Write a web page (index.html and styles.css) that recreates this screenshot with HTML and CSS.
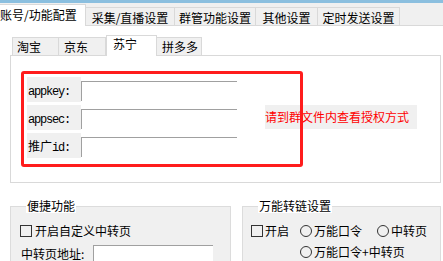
FILE: index.html
```html
<!DOCTYPE html>
<html lang="zh-CN">
<head>
<meta charset="utf-8">
<title>配置</title>
<link rel="stylesheet" href="styles.css">
</head>
<body>
<div class="titlebar"></div>
<div class="tabs">
  <div class="tab active">账号/功能配置</div>
  <div class="tab t2">采集/直播设置</div>
  <div class="tab t3">群管功能设置</div>
  <div class="tab t4">其他设置</div>
  <div class="tab t5">定时发送设置</div>
</div>
<div class="content">
  <div class="subtabs">
    <div class="subtab s1">淘宝</div>
    <div class="subtab s2">京东</div>
    <div class="subtab s3 current">苏宁</div>
    <div class="subtab s4">拼多多</div>
  </div>
  <div class="panel">
    <div class="rows">
      <div class="row"><span class="lbl"><span class="mono">appkey:</span></span><span class="input"></span></div>
      <div class="row"><span class="lbl"><span class="mono">appsec:</span></span><span class="input"></span><span class="hint">请到群文件内查看授权方式</span></div>
      <div class="row"><span class="lbl">推广<span class="mono">id:</span></span><span class="input"></span></div>
    </div>
    <div class="redbox"></div>
  </div>
  <div class="groups">
    <fieldset class="group g1">
      <legend>便捷功能</legend>
      <div class="opt"><span class="check"></span><span class="otext">开启自定义中转页</span></div>
      <div class="addr"><span class="addr-lbl">中转页地址:</span><span class="input addr-input"></span></div>
    </fieldset>
    <fieldset class="group g2">
      <legend>万能转链设置</legend>
      <div class="opt"><span class="check"></span><span class="otext">开启</span><span class="radio r1"></span><span class="otext">万能口令</span><span class="radio r2"></span><span class="otext">中转页</span></div>
      <div class="opt opt2"><span class="radio r3"></span><span class="otext">万能口令+中转页</span></div>
    </fieldset>
  </div>
</div>
</body>
</html>
```

FILE: styles.css
```css
* { box-sizing: border-box; }
html, body {
  margin: 0;
  padding: 0;
}
body {
  width: 443px;
  height: 261px;
  overflow: hidden;
  background: #ffffff;
  color: #000;
  font-family: "Noto Sans CJK SC", "Noto Sans", sans-serif;
  font-size: 12px;
  line-height: 14px;
}
.titlebar {
  height: 3px;
  background: #8bbfdf;
}
.tabs {
  display: flex;
  align-items: flex-end;
  height: 23px;
  background: #f0f0f0;
  border-bottom: 1px solid #d9d9d9;
}
.tab {
  height: 18px;
  padding-top: 3px;
  text-align: center;
  white-space: nowrap;
  border: 1px solid #d9d9d9;
  border-bottom: none;
  background: #f0f0f0;
}
.tab.active {
  width: 88px;
  height: 22px;
  margin-left: -2px;
  margin-bottom: -1px;
  padding-left: 2px;
  padding-top: 3px;
  text-align: left;
  background: #ffffff;
  border-left: none;
}
.t2 { width: 89px; border-left: none; }
.t3 { width: 81px; border-left: none; }
.t4 { width: 62px; border-left: none; }
.t5 { width: 82px; border-left: none; }

.content {
  padding-top: 9px;
}
.subtabs {
  display: flex;
  align-items: flex-end;
  height: 20px;
  margin-left: 12px;
}
.subtab {
  height: 18px;
  padding-top: 2px;
  padding-left: 5px;
  white-space: nowrap;
  background: #f0f0f0;
  border: 1px solid #d9d9d9;
  border-bottom: none;
}
.s1 { width: 47px; padding-left: 4px; }
.s2 { width: 47px; border-left: none; }
.s3 { width: 51px; padding-left: 6px; }
.s4 { width: 45px; border-left: none; }
.subtab.current {
  height: 21px;
  margin-bottom: -1px;
  padding-top: 1px;
  background: #fff;
  position: relative;
  z-index: 1;
}
.panel {
  position: relative;
  margin-left: 10px;
  width: 431px;
  height: 128px;
  border: 1px solid #d9d9d9;
  padding: 21px 0 0 16px;
}
.rows {
  display: flex;
  flex-direction: column;
  gap: 3px;
}
.row {
  display: flex;
  align-items: flex-start;
  height: 25px;
}
.lbl {
  width: 54px;
  height: 25px;
  padding-left: 1px;
  line-height: 25px;
  background: #f0f0f0;
  white-space: nowrap;
}
.mono {
  font-family: "Liberation Mono", "DejaVu Sans Mono", monospace;
  font-size: 12px;
  letter-spacing: -1.2px;
}
.input {
  display: block;
  width: 156px;
  height: 20px;
  margin-top: 4px;
  background: #fff;
  border-top: 1px solid #a0a0a0;
  border-left: 1px solid #a0a0a0;
}
.hint {
  margin-left: 28px;
  height: 24px;
  line-height: 24px;
  padding-right: 8px;
  background: #f0f0f0;
  color: #ff0000;
  white-space: nowrap;
}
.redbox {
  position: absolute;
  left: 10px;
  top: 15px;
  width: 282px;
  height: 96px;
  border: 3px solid #ff1c1c;
  border-radius: 3px;
}
.groups {
  display: flex;
  gap: 11px;
  height: 66px;
  overflow: hidden;
  margin-top: 12px;
  padding-top: 4px;
  padding-left: 10px;
}
.group {
  margin: 0;
  padding: 11px 0 0 8px;
  min-width: 0;
  height: 80px;
  flex-shrink: 0;
  background: #f0f0f0;
  border: 1px solid #dcdcdc;
}
.g1 { width: 221px; padding-left: 9px; }
.g2 { width: 199px; }
.group legend {
  margin-left: 6px;
  padding: 0 1px;
  background: #fff;
  line-height: 14px;
  white-space: nowrap;
}
.g2 legend { margin-left: 7px; }
.opt {
  display: flex;
  align-items: center;
  height: 14px;
  white-space: nowrap;
}
.check {
  display: block;
  width: 12px;
  height: 12px;
  border: 1px solid #333;
  margin-right: 2px;
}
.g1 .check { margin-right: 3px; }
.radio {
  display: block;
  width: 12px;
  height: 12px;
  border: 1px solid #333;
  border-radius: 50%;
  margin-right: 2px;
}
.r1 { margin-left: 11px; }
.r2 { margin-left: 15px; }
.r3 { margin-left: 49px; }
.opt2 { margin-top: 7px; }
.addr {
  display: flex;
  align-items: flex-start;
  margin-top: 7px;
  margin-left: 1px;
}
.addr-lbl {
  width: 72px;
  padding-top: 2px;
  white-space: nowrap;
}
.addr-input {
  width: 120px;
  margin-top: 0;
}
```
